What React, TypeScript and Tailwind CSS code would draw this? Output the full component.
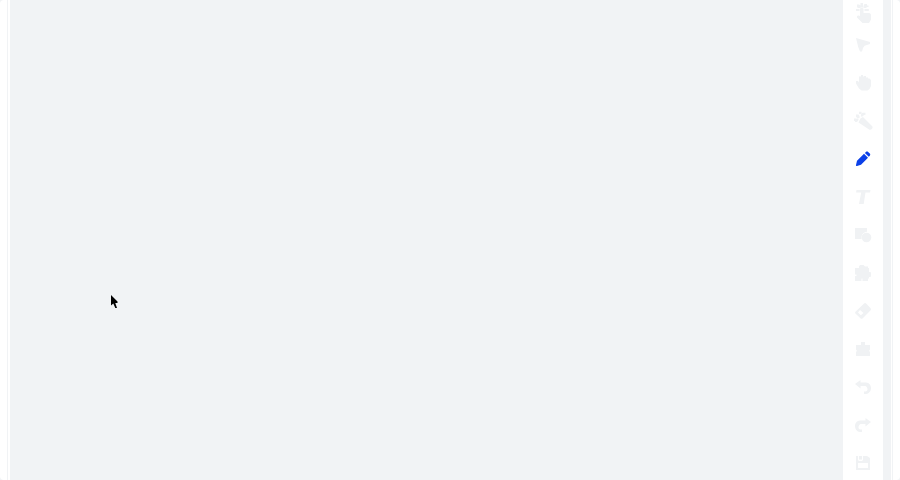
import { useState } from 'react'
import type { ReactNode } from 'react'
import clsx from 'clsx'

type Tool = {
  id: string
  label: string
  icon: ReactNode
}

const tools: Tool[] = [
  {
    id: 'cursor',
    label: 'Select',
    icon: <path d="M1 1 15 5v2L9.600 8.800 8 11l-1 3.400H5L3.200 10 2 5Z" />,
  },
  {
    id: 'hand',
    label: 'Pan',
    icon: (
      <path d="M4 3V1.500h2V0h2v1.500h1V1h2v1.500h2v1h1.500L16 5v6l-1.500 3-2 1.500H6.500L4 13.500 2.500 11 1 8.500V6h2l1 1.500Z" />
    ),
  },
  {
    id: 'wand',
    label: 'Magic wand',
    icon: (
      <>
        <path d="M5.500 5.500 8 4l9 9c1 1 .7 2.200-.1 3-.8.900-2.200 1.200-3.200.3L3.500 9.500Z" />
        <path d="M4-1.200h2.500V1H4ZM7.500-.2h3v2L9 2 7.500 3.500H6V1.500ZM1 1.500h2.500L4.500 3v2H2.500L1 4ZM-1 5.500h2V8h-2ZM1.500 5.500h2V7L2 9H0V7.500Z" />
      </>
    ),
  },
  {
    id: 'pencil',
    label: 'Pencil',
    icon: (
      <path d="m9 2.700 4 4-7 7-4 1.300c-.6.200-1.200-.3-1-1L2 9.700ZM9.900 1.900l1-1c.6-.6 1.600-.6 2.200 0l1.700 1.700c.6.600.6 1.500 0 2.100l-1 1Z" />
    ),
  },
  {
    id: 'text',
    label: 'Text',
    icon: <path d="M1.500 1H15.500L15 3.500h-4.500L8.700 15H4L6.200 3.500H1Z" />,
  },
  {
    id: 'shapes',
    label: 'Shapes',
    icon: (
      <>
        <path d="M0 1h12v3.800A5.500 5.500 0 0 0 6.500 10v2H0Z" />
        <circle cx="11.500" cy="10.500" r="4.800" />
      </>
    ),
  },
  {
    id: 'puzzle',
    label: 'Puzzle',
    icon: (
      <path d="M0 3h4V1.500L5 0h3.500l1.500 1.500h3V3h1v4h1.500l.5 1v3l-.5 1H14v1.500h-1V16H7.500v-2.500h-1V16H0v-5h1.500V9.500H0Z" />
    ),
  },
  {
    id: 'eraser',
    label: 'Eraser',
    icon: (
      <path
        fillRule="evenodd"
        d="M8.800.7c.8-.9 1.800-.9 2.600 0L15.400 5c.8.800.8 1.800 0 2.600l-7.600 7.600c-.8.800-1.600.8-2.400 0L.7 10.800c-.8-.8-.8-1.600 0-2.400ZM5 7 3 9.500 5.800 12.300 8.500 10Z"
      />
    ),
  },
  {
    id: 'toolbox',
    label: 'Toolbox',
    icon: <path d="M6 1h4v3h5v4.500L14 10l1 .800V15H1v-4.200L2 10 1 8.500V4h5Z" />,
  },
  {
    id: 'undo',
    label: 'Undo',
    icon: (
      <path d="M0 5 5.500 1v2.500H11c3 .2 5 2.600 5 5.500s-2 6-5 6H9v-2.500h1.500c1.300 0 2-.9 2-2.200S11.500 7 10 7H5.500v2.500Z" />
    ),
  },
  {
    id: 'redo',
    label: 'Redo',
    icon: (
      <path d="M16 5 10.500 1v2.500H5C2 3.700 0 6.100 0 9s2 6 5 6h2v-2.500H5.500c-1.300 0-2-.9-2-2.200S4.500 7 6 7h4.500v2.500Z" />
    ),
  },
  {
    id: 'save',
    label: 'Save',
    icon: (
      <path
        fillRule="evenodd"
        d="M1 1h2v3.500C3 5.300 3.700 6 4.500 6h2C7.300 6 8 5.300 8 4.500V1h4l3 2v12H1ZM3 8v5h10V8ZM4 1h3v3.500H4Z"
      />
    ),
  },
]

function ToolButton({
  label,
  active,
  onClick,
  children,
}: {
  label: string
  active: boolean
  onClick: () => void
  children: ReactNode
}) {
  return (
    <button
      type="button"
      aria-label={label}
      aria-pressed={active}
      onClick={onClick}
      className={clsx(
        'flex h-[38px] w-full shrink-0 items-center justify-center',
        active ? 'text-[#0b40e8]' : 'text-[#f0f2f4]'
      )}
    >
      <svg viewBox="0 0 16 16" fill="currentColor" className="size-4 overflow-visible">
        {children}
      </svg>
    </button>
  )
}

function Pointer() {
  return (
    <svg viewBox="0 0 7 14" className="absolute top-[295px] left-[101px] h-3.5 w-[7px]">
      <path d="M0 0v10.500L2.300 8.500l2 4.500H6L4.300 8H6.500V6.500Z" fill="#000" />
    </svg>
  )
}

export default function App() {
  const [activeTool, setActiveTool] = useState('pencil')

  return (
    <div className="h-screen overflow-hidden bg-[#f1f3f5]">
      <div className="flex h-full rounded-sm bg-white px-[7px]">
        <div className="flex flex-1 border-x border-[#f1f3f5] pr-px pl-0.5">
          <main className="relative flex-1 bg-[#f1f3f5]">
            <Pointer />
          </main>

          <aside className="flex w-10 flex-col overflow-hidden bg-white">
            <button
              type="button"
              aria-label="Touch"
              aria-pressed={activeTool === 'touch'}
              onClick={() => setActiveTool('touch')}
              className={clsx(
                'flex h-[26px] w-full shrink-0 items-center justify-center',
                activeTool === 'touch' ? 'text-[#0b40e8]' : 'text-[#f0f2f4]'
              )}
            >
              <svg viewBox="0 0 16 20" fill="currentColor" className="h-5 w-4">
                <path d="M5 6c0-1.300 3.500-1.300 3.500 0v4H14c1.200.2 2 1 2 2v4.500L14 20H7.500L2 14.500c-.5-1.400.5-2.200 1.500-2L5 13Z" />
                <path d="M1 6h3.500v2H1ZM9.500 6h4.300v2H9.500ZM2 1.500h2l1.500 1V5H3L2 4ZM5.500 0H8v4.500H5.500ZM9.500 1H12v1.500h1.500V4H12l-1 1H8.500V3Z" />
              </svg>
            </button>

            {tools.map((tool) => (
              <ToolButton
                key={tool.id}
                label={tool.label}
                active={activeTool === tool.id}
                onClick={() => setActiveTool(tool.id)}
              >
                {tool.icon}
              </ToolButton>
            ))}
          </aside>

          <div className="w-2 bg-[#f1f3f5]" />
        </div>
      </div>
    </div>
  )
}
